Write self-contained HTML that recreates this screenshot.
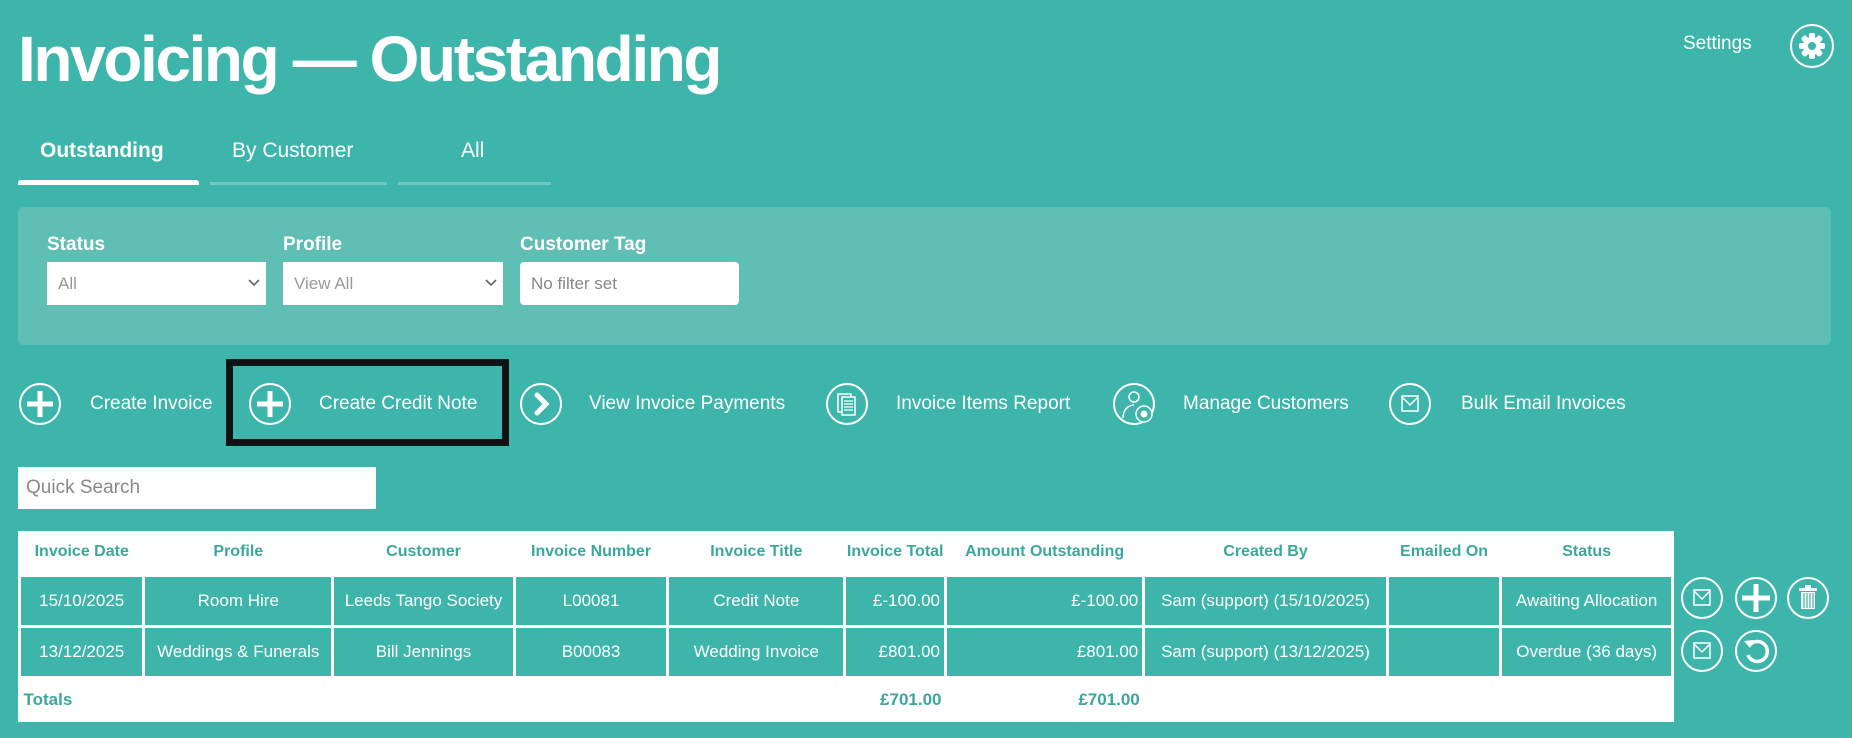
<!DOCTYPE html>
<html><head><meta charset="utf-8">
<style>
*{box-sizing:border-box;margin:0;padding:0}
body{width:1852px;height:738px;overflow:hidden;background:#3db5aa;font-family:"Liberation Sans",sans-serif;color:#fff;position:relative}
.abs{position:absolute}
h1{position:absolute;left:18px;top:23px;font-size:64px;font-weight:bold;letter-spacing:-2.4px;line-height:72px;white-space:nowrap}
.settings{left:1683px;top:33px;font-size:19px}
.tab{top:139px;font-size:21px}
.ul{top:182px;height:3px;background:#6fc9bf}
.panel{left:18px;top:207px;width:1813px;height:138px;background:#5fbfb5;border-radius:6px}
.lbl{top:234px;font-size:19px;font-weight:bold}
.sel{top:262px;height:43px;background:#fff;color:#999;font-size:17px;line-height:43px;padding-left:11px}
.sel svg{position:absolute;right:6px;top:17px}
.act{top:393px;font-size:19px;white-space:nowrap}
.ic{position:absolute}
table{position:absolute;left:18px;top:531px;width:1656px;border-collapse:collapse;background:#fff;font-size:17px}
th{color:#3aa89c;font-weight:bold;height:44px;text-align:center;padding:0 2px;white-space:nowrap;font-size:16px}
td{background:#3db5aa;color:#fff;border:3px solid #fff;height:51px;text-align:center;padding:0 4px;white-space:nowrap}
td.r{text-align:right}
tr.tot td{background:#fff;color:#3aa89c;font-weight:bold;border:none;height:45px}
</style></head><body>
<h1>Invoicing — Outstanding</h1>
<div class="abs settings">Settings</div>
<svg class="ic" style="left:1789px;top:23px" width="46" height="46" viewBox="0 0 46 46">
<circle cx="23" cy="23" r="21" fill="none" stroke="#fff" stroke-width="2"/>
<g fill="#fff" transform="translate(23 23)">
<circle r="9"/>
<rect x="-3" y="-13" width="6" height="26" rx="2"/>
<rect x="-3" y="-13" width="6" height="26" rx="2" transform="rotate(45)"/>
<rect x="-3" y="-13" width="6" height="26" rx="2" transform="rotate(90)"/>
<rect x="-3" y="-13" width="6" height="26" rx="2" transform="rotate(135)"/>
<circle r="4" fill="#3db5aa"/>
</g></svg>

<div class="abs tab" style="left:40px;font-weight:bold">Outstanding</div>
<div class="abs tab" style="left:232px">By Customer</div>
<div class="abs tab" style="left:461px">All</div>
<div class="abs" style="left:18px;top:180px;width:181px;height:5px;background:#fff;border-radius:3px 3px 0 0"></div>
<div class="abs ul" style="left:210px;width:177px"></div>
<div class="abs ul" style="left:398px;width:153px"></div>

<div class="abs panel"></div>
<div class="abs lbl" style="left:47px">Status</div>
<div class="abs lbl" style="left:283px">Profile</div>
<div class="abs lbl" style="left:520px">Customer Tag</div>
<div class="abs sel" style="left:47px;width:219px">All<svg width="12" height="8"><path d="M1 1l5 5 5-5" stroke="#666" stroke-width="1.6" fill="none"/></svg></div>
<div class="abs sel" style="left:283px;width:220px">View All<svg width="12" height="8"><path d="M1 1l5 5 5-5" stroke="#666" stroke-width="1.6" fill="none"/></svg></div>
<div class="abs sel" style="left:520px;width:219px;border-radius:4px;color:#888">No filter set</div>

<div class="abs" style="left:226px;top:359px;width:283px;height:87px;border:7px solid #0b1414"></div>
<svg class="ic" style="left:18px;top:382px" width="44" height="44" viewBox="0 0 44 44"><circle cx="22" cy="22" r="20" fill="none" stroke="#fff" stroke-width="2"/><path d="M22 9v26M9 22h26" stroke="#fff" stroke-width="5"/></svg>
<div class="abs act" style="left:90px">Create Invoice</div>
<svg class="ic" style="left:248px;top:382px" width="44" height="44" viewBox="0 0 44 44"><circle cx="22" cy="22" r="20" fill="none" stroke="#fff" stroke-width="2"/><path d="M22 9v26M9 22h26" stroke="#fff" stroke-width="5"/></svg>
<div class="abs act" style="left:319px">Create Credit Note</div>
<svg class="ic" style="left:519px;top:382px" width="44" height="44" viewBox="0 0 44 44"><circle cx="22" cy="22" r="20" fill="none" stroke="#fff" stroke-width="2"/><path d="M18 13l9 9-9 9" stroke="#fff" stroke-width="5" fill="none" stroke-linecap="round"/></svg>
<div class="abs act" style="left:589px">View Invoice Payments</div>
<svg class="ic" style="left:825px;top:382px" width="44" height="44" viewBox="0 0 44 44"><circle cx="22" cy="22" r="20" fill="none" stroke="#fff" stroke-width="2"/><rect x="13" y="12" width="13" height="18" fill="none" stroke="#fff" stroke-width="1.5"/><rect x="17" y="15" width="13" height="18" fill="#3db5aa" stroke="#fff" stroke-width="1.5"/><path d="M19 19h9M19 22h9M19 25h9M19 28h9" stroke="#fff" stroke-width="1.2"/></svg>
<div class="abs act" style="left:896px">Invoice Items Report</div>
<svg class="ic" style="left:1112px;top:382px" width="46" height="44" viewBox="0 0 46 44"><circle cx="22" cy="22" r="20" fill="none" stroke="#fff" stroke-width="2"/><circle cx="22" cy="15" r="5" fill="none" stroke="#fff" stroke-width="1.5"/><path d="M11 36c0-8 5-13 11-13" fill="none" stroke="#fff" stroke-width="1.5"/><circle cx="32" cy="32" r="8" fill="#3db5aa" stroke="#fff" stroke-width="1.5"/><circle cx="32" cy="32" r="3.5" fill="#fff"/></svg>
<div class="abs act" style="left:1183px">Manage Customers</div>
<svg class="ic" style="left:1388px;top:382px" width="44" height="44" viewBox="0 0 44 44"><circle cx="22" cy="22" r="20" fill="none" stroke="#fff" stroke-width="2"/><rect x="14" y="14" width="16" height="15" fill="none" stroke="#fff" stroke-width="1.5"/><path d="M14 15l8 8 8-8" fill="none" stroke="#fff" stroke-width="1.5"/></svg>
<div class="abs act" style="left:1461px">Bulk Email Invoices</div>

<div class="abs" style="left:18px;top:467px;width:358px;height:42px;background:#fff;color:#888;font-size:19px;line-height:42px;padding-left:8px">Quick Search</div>

<table>
<colgroup><col style="width:125px"><col style="width:189px"><col style="width:182px"><col style="width:154px"><col style="width:178px"><col style="width:99px"><col style="width:199px"><col style="width:244px"><col style="width:114px"><col style="width:172px"></colgroup>
<tr><th>Invoice Date</th><th>Profile</th><th>Customer</th><th>Invoice Number</th><th>Invoice Title</th><th>Invoice Total</th><th>Amount Outstanding</th><th>Created By</th><th>Emailed On</th><th>Status</th></tr>
<tr><td>15/10/2025</td><td>Room Hire</td><td>Leeds Tango Society</td><td>L00081</td><td>Credit Note</td><td class="r">£-100.00</td><td class="r">£-100.00</td><td>Sam (support) (15/10/2025)</td><td></td><td>Awaiting Allocation</td></tr>
<tr><td>13/12/2025</td><td>Weddings &amp; Funerals</td><td>Bill Jennings</td><td>B00083</td><td>Wedding Invoice</td><td class="r">£801.00</td><td class="r">£801.00</td><td>Sam (support) (13/12/2025)</td><td></td><td>Overdue (36 days)</td></tr>
<tr class="tot"><td style="text-align:left">Totals</td><td></td><td></td><td></td><td></td><td class="r">£701.00</td><td class="r">£701.00</td><td></td><td></td><td></td></tr>
</table>

<svg class="ic" style="left:1680px;top:576px" width="44" height="44" viewBox="0 0 44 44"><circle cx="22" cy="22" r="20" fill="none" stroke="#fff" stroke-width="2"/><rect x="14" y="14" width="16" height="15" fill="none" stroke="#fff" stroke-width="1.5"/><path d="M14 15l8 8 8-8" fill="none" stroke="#fff" stroke-width="1.5"/></svg>
<svg class="ic" style="left:1734px;top:576px" width="44" height="44" viewBox="0 0 44 44"><circle cx="22" cy="22" r="20" fill="none" stroke="#fff" stroke-width="2"/><path d="M22 8v28M8 22h28" stroke="#fff" stroke-width="5"/></svg>
<svg class="ic" style="left:1786px;top:576px" width="44" height="44" viewBox="0 0 44 44"><circle cx="22" cy="22" r="20" fill="none" stroke="#fff" stroke-width="2"/><rect x="19" y="9" width="6" height="3" fill="#fff"/><rect x="13" y="12" width="18" height="3" fill="#fff"/><rect x="15" y="16" width="14" height="17" fill="#fff"/><path d="M18 17v15M21 17v15M24 17v15M27 17v15" stroke="#3db5aa" stroke-width="1.2"/></svg>
<svg class="ic" style="left:1680px;top:629px" width="44" height="44" viewBox="0 0 44 44"><circle cx="22" cy="22" r="20" fill="none" stroke="#fff" stroke-width="2"/><rect x="14" y="14" width="16" height="15" fill="none" stroke="#fff" stroke-width="1.5"/><path d="M14 15l8 8 8-8" fill="none" stroke="#fff" stroke-width="1.5"/></svg>
<svg class="ic" style="left:1734px;top:629px" width="44" height="44" viewBox="0 0 44 44"><circle cx="22" cy="22" r="20" fill="none" stroke="#fff" stroke-width="2"/><path d="M15 17A10 10 0 1 1 14 26" fill="none" stroke="#fff" stroke-width="3.5"/><path d="M10 12l6 7 3-8z" fill="#fff"/></svg>
</body></html>
